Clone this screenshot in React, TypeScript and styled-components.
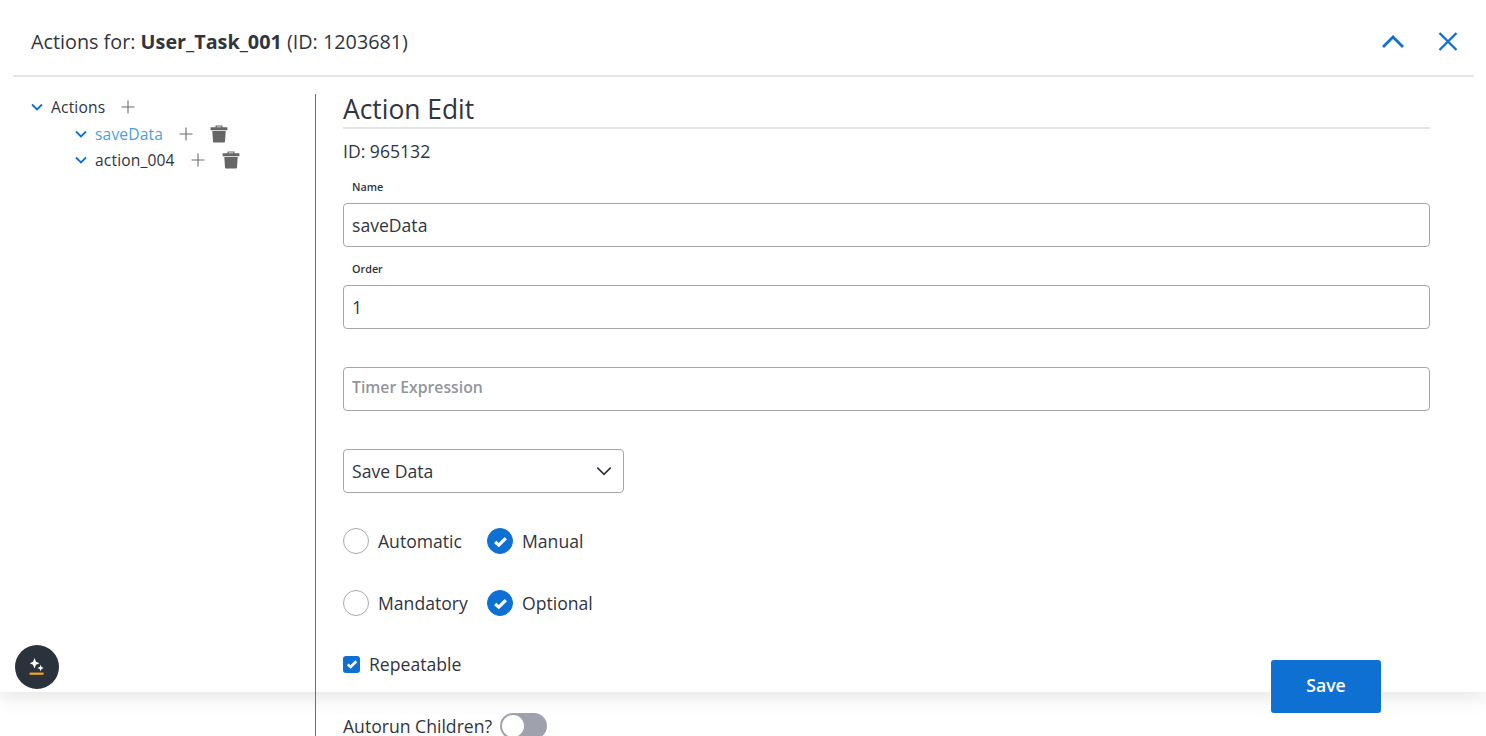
import { ReactNode } from "react";
import styled, { createGlobalStyle } from "styled-components";

const GlobalStyle = createGlobalStyle`
    html, body {
        margin: 0;
        height: 100%;
        overflow: hidden;
        background: #fff;
    }
    body {
        font-family: "Open Sans", "Liberation Sans", sans-serif;
        color: #31353d;
    }
    * {
        box-sizing: border-box;
    }
`;

const Panel = styled.div`
    position: relative;
    height: 692px;
    background: #fff;
    box-shadow: 0 6px 18px rgba(0, 0, 0, 0.1);
`;

const Header = styled.header`
    height: 77px;
    margin: 0 12px 0 13px;
    padding: 8px 14px 0 18px;
    display: flex;
    align-items: center;
    justify-content: space-between;
    border-bottom: 2px solid #e4e4e9;
`;

const Title = styled.h1`
    margin: 0;
    font-size: 19.8px;
    font-weight: 400;
    line-height: 24px;
    color: #31353d;

    strong {
        font-weight: 700;
    }
`;

const HeaderActions = styled.div`
    display: flex;
    align-items: center;
    gap: 31px;
`;

const IconButton = styled.button`
    padding: 0;
    border: 0;
    background: none;
    display: flex;
    color: #0f70d4;
`;

const Body = styled.div`
    display: flex;
    padding-top: 17px;
`;

const TreePane = styled.nav`
    width: 316px;
    height: 660px;
    flex: none;
    padding: 0 0 0 31px;
    border-right: 1px solid #6c7077;
`;

const TreeRow = styled.div<{ $depth: number }>`
    height: 26.5px;
    display: flex;
    align-items: center;
    margin-left: ${({ $depth }) => $depth * 44}px;
`;

const TreeLabel = styled.span<{ $active?: boolean }>`
    margin-left: 8px;
    font-size: 15.6px;
    letter-spacing: 0.15px;
    color: ${({ $active }) => ($active ? "#4a9fe0" : "#31353d")};
`;

const PlusWrap = styled.span`
    display: flex;
    margin-left: 16px;
    color: #6b6b6b;
`;

const TrashWrap = styled.span`
    display: flex;
    margin-left: 17px;
    color: #666;
`;

const EditPane = styled.main`
    width: 1087px;
    margin-left: 27px;
`;

const SectionTitle = styled.h2`
    margin: 0;
    height: 35px;
    font-size: 26.4px;
    font-weight: 400;
    line-height: 30px;
    color: #31353d;
    border-bottom: 2px solid #e4e4e9;
`;

const IdLine = styled.div`
    margin-top: 10px;
    height: 26px;
    font-size: 17.6px;
    line-height: 24px;
`;

const FieldLabel = styled.label`
    display: block;
    margin: 13px 0 0 9px;
    height: 25px;
    font-size: 10.8px;
    font-weight: 600;
    line-height: 17px;
`;

const TextInput = styled.input<{ $gap?: number }>`
    display: block;
    width: 100%;
    height: 44px;
    margin-top: ${({ $gap = 0 }) => $gap}px;
    padding: 0 8px;
    border: 1px solid #a5a7ab;
    border-radius: 4px;
    background: #fff;
    outline: none;
    font-family: inherit;
    font-size: 17.6px;
    color: #31353d;

    &:placeholder-shown {
        padding-bottom: 4px;
        font-size: 15.75px;
    }

    &::placeholder {
        color: #92959b;
        font-weight: 600;
        opacity: 1;
    }
`;

const SelectBox = styled.div`
    width: 281px;
    height: 44px;
    margin-top: 38px;
    padding: 0 11px 0 8px;
    display: flex;
    align-items: center;
    justify-content: space-between;
    border: 1px solid #a5a7ab;
    border-radius: 4px;
    font-size: 17.6px;
    color: #31353d;
`;

const RadioRow = styled.div<{ $top: number }>`
    display: flex;
    align-items: center;
    height: 26px;
    margin-top: ${({ $top }) => $top}px;
`;

const RadioItem = styled.div<{ $width: number }>`
    display: flex;
    align-items: center;
    width: ${({ $width }) => $width}px;
    font-size: 17.6px;
`;

const RadioMark = styled.span<{ $checked?: boolean }>`
    width: 26px;
    height: 26px;
    flex: none;
    margin-right: 9px;
    display: flex;
    align-items: center;
    justify-content: center;
    border-radius: 50%;
    border: 1px solid ${({ $checked }) => ($checked ? "#0f70d4" : "#aaacb0")};
    background: ${({ $checked }) => ($checked ? "#0f70d4" : "#fff")};
`;

const CheckRow = styled.div`
    display: flex;
    align-items: center;
    height: 26px;
    margin-top: 35px;
    font-size: 17.6px;
`;

const CheckMark = styled.span`
    width: 17px;
    height: 17px;
    margin-right: 9px;
    display: flex;
    align-items: center;
    justify-content: center;
    border-radius: 3px;
    background: #0f70d4;
`;

const ToggleRow = styled.div`
    display: flex;
    align-items: flex-start;
    height: 26px;
    margin-top: 36px;
    font-size: 17.6px;
    line-height: 20px;
`;

const ToggleText = styled.span`
    margin-top: 3px;
`;

const Toggle = styled.span`
    width: 47px;
    height: 26px;
    margin-left: 8px;
    padding: 2px;
    border-radius: 13px;
    background: #9fa2ac;
`;

const ToggleKnob = styled.span`
    display: block;
    width: 22px;
    height: 22px;
    border-radius: 50%;
    background: #fff;
`;

const SaveButton = styled.button`
    position: absolute;
    top: 660px;
    left: 1271px;
    width: 110px;
    height: 53px;
    padding: 0 0 4px;
    border: 0;
    border-radius: 3px;
    background: #0f70d4;
    box-shadow: 0 0 0 1px #fff;
    color: #fff;
    font-family: inherit;
    font-size: 17.6px;
    font-weight: 600;
`;

const AssistantButton = styled.button`
    position: absolute;
    top: 645px;
    left: 15px;
    width: 44px;
    height: 44px;
    padding: 0;
    border: 0;
    border-radius: 50%;
    display: flex;
    align-items: center;
    justify-content: center;
    background: #2a323c;
`;

const Chevron = ({ up, size = 12, color = "#0f70d4", width = 1.8 }: { up?: boolean; size?: number; color?: string; width?: number }) => (
    <svg width={size} height={size} viewBox="0 0 12 12" fill="none" stroke={color} strokeWidth={width}>
        <path d={up ? "M1 8.5 6 3.5l5 5" : "M1 3.5l5 5 5-5"} />
    </svg>
);

const PlusIcon = () => (
    <svg width="14" height="14" viewBox="0 0 14 14" stroke="currentColor" strokeWidth="1.1" fill="none">
        <path d="M7 0.5v13M0.5 7h13" />
    </svg>
);

const TrashIcon = () => (
    <svg width="18" height="18" viewBox="0 0 18 18" fill="currentColor">
        <path d="M5.5 0.5h7v1.8h4.9v3H.6v-3h4.9zM6.7 1.5v.8h4.6v-.8z" />
        <path d="M2.3 6.1h13.4l-.7 10.7c0 .4-.3.7-.7.7H3.7c-.4 0-.7-.3-.7-.7z" />
    </svg>
);

const TickIcon = ({ size = 15 }: { size?: number }) => (
    <svg width={size} height={size} viewBox="0 0 14 14" fill="none" stroke="#fff" strokeWidth="3">
        <path d="M2 7.4 5.4 10.4 12 3.8" />
    </svg>
);

const SparkleIcon = () => (
    <svg width="16" height="20" viewBox="0 0 16 20">
        <path fill="#fff" d="M5.5 1 7 4.7 10.5 6.2 7 7.7 5.5 11.4 4 7.7 0.8 6.2 4 4.7z" />
        <path fill="#fff" d="M11.6 7.7 12.5 10 14.8 11 12.5 12 11.6 14.3 10.7 12 8.4 11 10.7 10z" />
        <rect x="0.6" y="15.6" width="14" height="2.2" fill="#f5a623" />
    </svg>
);

const TreeNode = ({ depth, label, active, removable }: { depth: number; label: string; active?: boolean; removable?: boolean }) => (
    <TreeRow $depth={depth}>
        <Chevron />
        <TreeLabel $active={active}>{label}</TreeLabel>
        <PlusWrap>
            <PlusIcon />
        </PlusWrap>
        {removable ? (
            <TrashWrap>
                <TrashIcon />
            </TrashWrap>
        ) : null}
    </TreeRow>
);

const Radio = ({ checked, width, children }: { checked?: boolean; width: number; children: ReactNode }) => (
    <RadioItem $width={width}>
        <RadioMark $checked={checked}>{checked ? <TickIcon /> : null}</RadioMark>
        {children}
    </RadioItem>
);

export default function App() {
    return (
        <>
            <GlobalStyle />
            <Panel>
                <Header>
                    <Title>
                        Actions for: <strong>User_Task_001</strong> (ID: 1203681)
                    </Title>
                    <HeaderActions>
                        <IconButton aria-label="Collapse">
                            <Chevron up size={24} width={1.4} />
                        </IconButton>
                        <IconButton aria-label="Close">
                            <svg width="24" height="24" viewBox="0 0 24 24" fill="none" stroke="currentColor" strokeWidth="2.4">
                                <path d="M3.5 3 20.5 20M20.5 3 3.5 20" />
                            </svg>
                        </IconButton>
                    </HeaderActions>
                </Header>
                <Body>
                    <TreePane>
                        <TreeNode depth={0} label="Actions" />
                        <TreeNode depth={1} label="saveData" active removable />
                        <TreeNode depth={1} label="action_004" removable />
                    </TreePane>
                    <EditPane>
                        <SectionTitle>Action Edit</SectionTitle>
                        <IdLine>ID: 965132</IdLine>
                        <FieldLabel>Name</FieldLabel>
                        <TextInput defaultValue="saveData" />
                        <FieldLabel>Order</FieldLabel>
                        <TextInput defaultValue="1" />
                        <TextInput $gap={38} placeholder="Timer Expression" />
                        <SelectBox>
                            Save Data
                            <Chevron size={16} color="#31353d" width={1.3} />
                        </SelectBox>
                        <RadioRow $top={35}>
                            <Radio width={144}>Automatic</Radio>
                            <Radio width={144} checked>Manual</Radio>
                        </RadioRow>
                        <RadioRow $top={36}>
                            <Radio width={144}>Mandatory</Radio>
                            <Radio width={144} checked>Optional</Radio>
                        </RadioRow>
                        <CheckRow>
                            <CheckMark>
                                <TickIcon size={12} />
                            </CheckMark>
                            Repeatable
                        </CheckRow>
                        <ToggleRow>
                            <ToggleText>Autorun Children?</ToggleText>
                            <Toggle>
                                <ToggleKnob />
                            </Toggle>
                        </ToggleRow>
                    </EditPane>
                </Body>
                <AssistantButton aria-label="Assistant">
                    <SparkleIcon />
                </AssistantButton>
                <SaveButton>Save</SaveButton>
            </Panel>
        </>
    );
}
